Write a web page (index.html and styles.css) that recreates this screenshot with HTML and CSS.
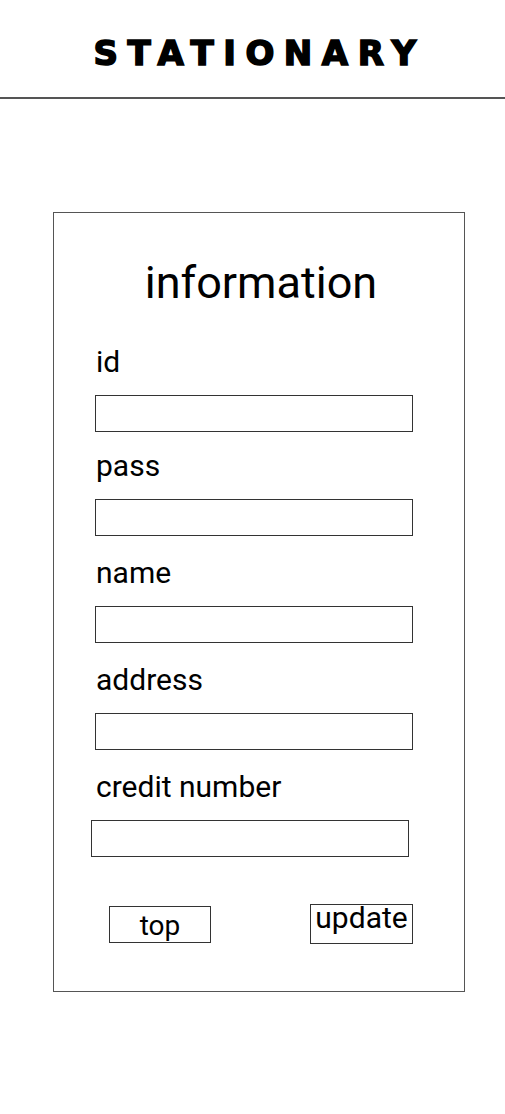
FILE: index.html
```html
<!DOCTYPE html>
<html lang="en">
<head>
<meta charset="utf-8">
<title>STATIONARY - information</title>
<link rel="stylesheet" href="styles.css">
</head>
<body>
<header class="site-header">
  <h1 class="logo">STATIONARY</h1>
</header>
<main class="page">
  <form class="card">
    <h2 class="card-title">information</h2>
    <div class="field field--first">
      <label class="field-label" for="f-id">id</label>
      <input class="field-input" id="f-id" type="text">
    </div>
    <div class="field">
      <label class="field-label" for="f-pass">pass</label>
      <input class="field-input" id="f-pass" type="password">
    </div>
    <div class="field">
      <label class="field-label" for="f-name">name</label>
      <input class="field-input" id="f-name" type="text">
    </div>
    <div class="field">
      <label class="field-label" for="f-address">address</label>
      <input class="field-input" id="f-address" type="text">
    </div>
    <div class="field">
      <label class="field-label" for="f-credit">credit number</label>
      <input class="field-input field-input--shift" id="f-credit" type="text">
    </div>
    <div class="actions">
      <button class="btn btn-top" type="button">top</button>
      <button class="btn btn-update" type="submit">update</button>
    </div>
  </form>
</main>
</body>
</html>
```
FILE: styles.css
```css
* { box-sizing: border-box; }

html, body {
  margin: 0;
  padding: 0;
  background: #ffffff;
  color: #000000;
  font-family: Roboto, "Noto Sans", sans-serif;
}

.site-header {
  height: 99px;
  border-bottom: 2px solid #555555;
  display: flex;
  align-items: center;
  justify-content: center;
  padding-top: 8px;
  padding-left: 14px;
}

.logo {
  margin: 0;
  font-family: "DejaVu Sans", "Liberation Sans", sans-serif;
  font-weight: 700;
  font-size: 34px;
  letter-spacing: 9.5px;
  line-height: 1;
  -webkit-text-stroke: 1.6px #000;
}

.page {
  padding: 113px 0 0 53px;
}

.card {
  width: 412px;
  height: 780px;
  border: 1px solid #555555;
  padding: 46px 0 0 42px;
  display: flex;
  flex-direction: column;
}

.card-title {
  margin: 0 0 41px 0;
  font-weight: 400;
  font-size: 45px;
  line-height: 48px;
  text-align: center;
  padding-right: 38px;
}

.field {
  display: flex;
  flex-direction: column;
  align-items: flex-start;
  margin-bottom: 23px;
}

.field--first {
  margin-bottom: 20px;
}

.field-label {
  font-size: 30px;
  line-height: 28px;
  margin-bottom: 19px;
}

.field-input {
  width: 318px;
  height: 37px;
  margin: 0 0 0 -1px;
  border: 1px solid #333333;
  border-radius: 0;
  background: #fff;
  padding: 0 6px;
  font: inherit;
  font-size: 18px;
  outline: none;
}

.field-input--shift {
  margin-left: -5px;
}

.actions {
  display: flex;
  justify-content: space-between;
  align-items: flex-start;
  width: 318px;
  margin-left: -1px;
  padding-left: 14px;
  margin-top: 24px;
}

.btn {
  border: 1px solid #333333;
  border-radius: 0;
  background: #fff;
  color: #000;
  font-family: Roboto, "Noto Sans", sans-serif;
  padding: 0;
  cursor: pointer;
}

.btn-top {
  width: 102px;
  height: 37px;
  margin-top: 2px;
  font-size: 28px;
  line-height: 28px;
  padding-top: 5px;
  padding-bottom: 2px;
}

.btn-update {
  width: 103px;
  height: 40px;
  font-size: 30px;
  line-height: 20px;
  padding-top: 3px;
  padding-bottom: 15px;
}
```
